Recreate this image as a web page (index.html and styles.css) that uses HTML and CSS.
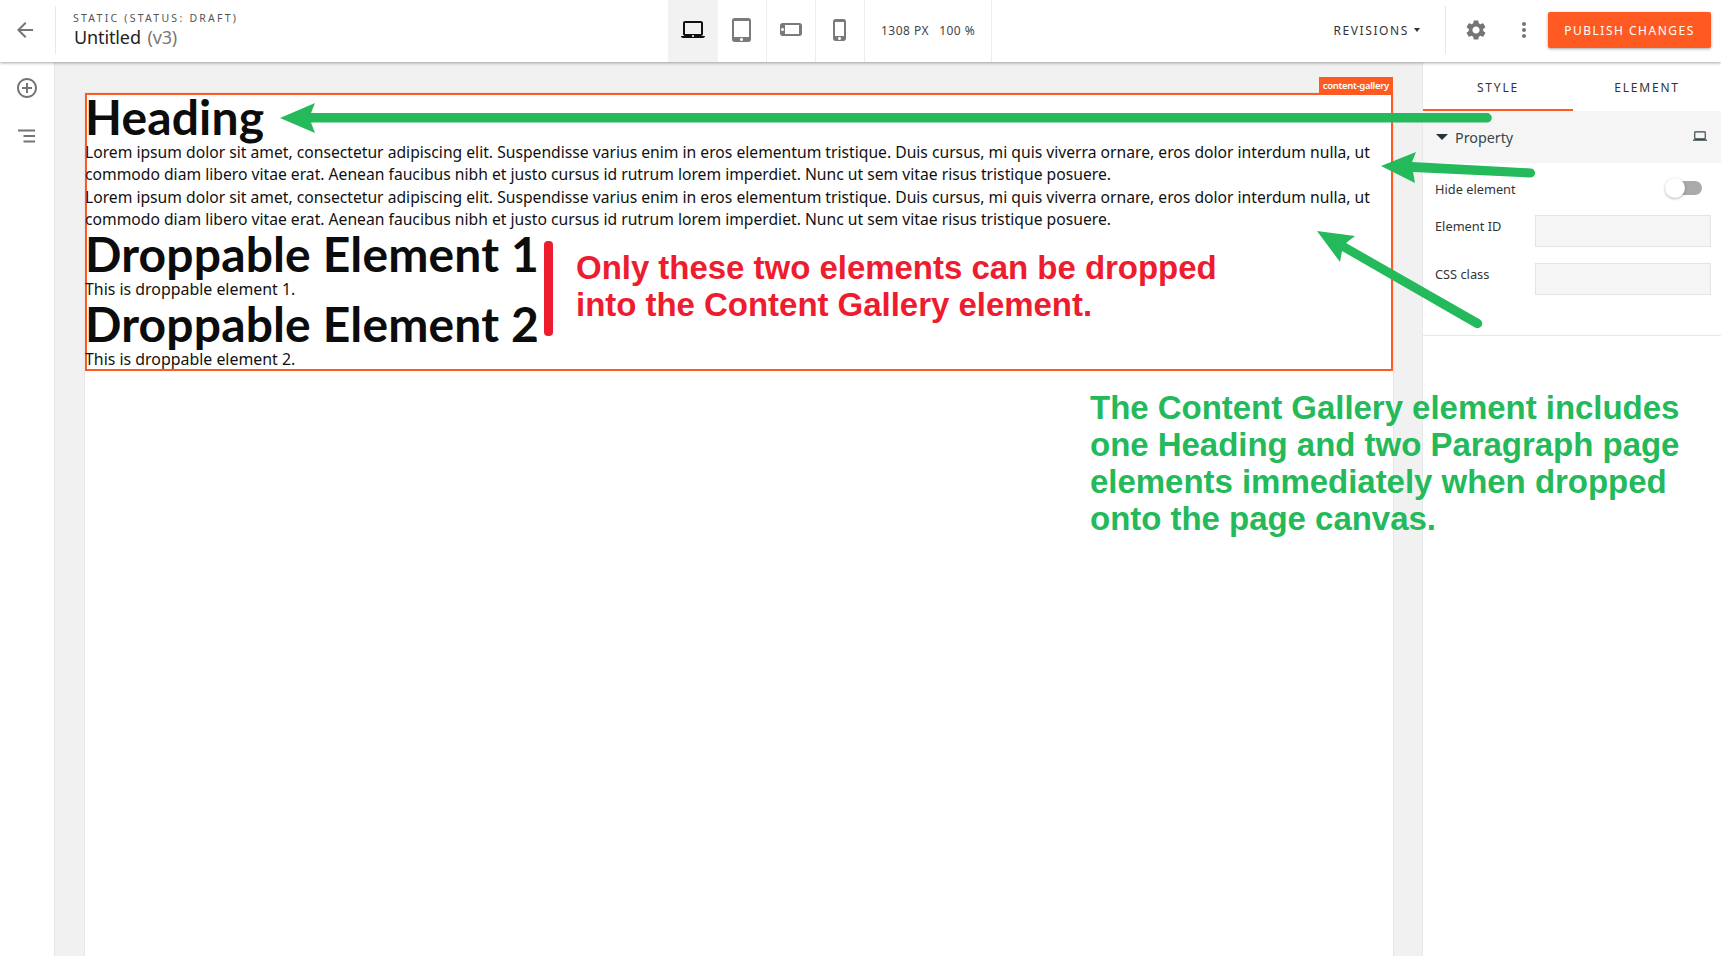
FILE: index.html
```html
<!DOCTYPE html>
<html lang="en">
<head>
  <meta charset="UTF-8" />
  <title>Untitled - Page Builder</title>
  <link rel="stylesheet" href="styles.css">
</head>
<body>
  <header class="topbar">
    <div class="topbar-left">
      <button class="back-btn">
        <svg viewBox="0 0 24 24" width="24" height="24"><path d="M20 11H7.83l5.59-5.59L12 4l-8 8 8 8 1.41-1.41L7.83 13H20v-2z"/></svg>
      </button>
      <div class="page-title">
        <div class="page-kind">STATIC (STATUS: DRAFT)</div>
        <div class="page-name">Untitled <span class="page-version">(v3)</span></div>
      </div>
    </div>
    <div class="devices">
      <div class="device active">
        <svg viewBox="0 0 24 24" width="24" height="24"><path d="M20 18c1.1 0 1.99-.9 1.99-2L22 5c0-1.1-.9-2-2-2H4c-1.1 0-2 .9-2 2v11c0 1.1.9 2 2 2H0c0 1.1.9 2 2 2h20c1.1 0 2-.9 2-2h-4zM4 5h16v11H4V5zm8 14c-.55 0-1-.45-1-1s.45-1 1-1 1 .45 1 1-.45 1-1 1z"/></svg>
      </div>
      <div class="device">
        <svg viewBox="0 0 24 24" width="24" height="24"><path d="M18.5 0h-14C3.12 0 2 1.12 2 2.5v19C2 22.88 3.12 24 4.5 24h14c1.38 0 2.5-1.12 2.5-2.5v-19C21 1.12 19.88 0 18.5 0zm-7 23c-.83 0-1.5-.67-1.5-1.5s.67-1.5 1.5-1.5 1.5.67 1.5 1.5-.67 1.5-1.5 1.5zm7.5-4H4V3h15v16z"/></svg>
      </div>
      <div class="device">
        <svg viewBox="0 0 24 24" width="24" height="24"><path transform="rotate(90 12 12)" d="M15.5 1h-8C6.12 1 5 2.12 5 3.5v17C5 21.88 6.12 23 7.5 23h8c1.38 0 2.5-1.12 2.5-2.5v-17C18 2.12 16.88 1 15.5 1zm-4 21c-.83 0-1.5-.67-1.5-1.5s.67-1.5 1.5-1.5 1.5.67 1.5 1.5-.67 1.5-1.5 1.5zm4.5-4H7V4h9v14z"/></svg>
      </div>
      <div class="device">
        <svg viewBox="0 0 24 24" width="24" height="24"><path d="M15.5 1h-8C6.12 1 5 2.12 5 3.5v17C5 21.88 6.12 23 7.5 23h8c1.38 0 2.5-1.12 2.5-2.5v-17C18 2.12 16.88 1 15.5 1zm-4 21c-.83 0-1.5-.67-1.5-1.5s.67-1.5 1.5-1.5 1.5.67 1.5 1.5-.67 1.5-1.5 1.5zm4.5-4H7V4h9v14z"/></svg>
      </div>
      <div class="canvas-size"><span>1308 PX</span><span>100 %</span></div>
    </div>
    <div class="topbar-right">
      <div class="revisions">REVISIONS <span class="caret"></span></div>
      <div class="icon-btn gear">
        <svg viewBox="0 0 24 24" width="24" height="24"><path d="M19.14 12.94c.04-.3.06-.61.06-.94 0-.32-.02-.64-.07-.94l2.03-1.58c.18-.14.23-.41.12-.61l-1.92-3.32c-.12-.22-.37-.29-.59-.22l-2.39.96c-.5-.38-1.03-.7-1.62-.94l-.36-2.54c-.04-.24-.24-.41-.48-.41h-3.84c-.24 0-.43.17-.47.41l-.36 2.54c-.59.24-1.13.57-1.62.94l-2.39-.96c-.22-.08-.47 0-.59.22L2.74 8.87c-.12.21-.08.47.12.61l2.03 1.58c-.05.3-.09.63-.09.94s.02.64.07.94l-2.03 1.58c-.18.14-.23.41-.12.61l1.92 3.32c.12.22.37.29.59.22l2.39-.96c.5.38 1.03.7 1.62.94l.36 2.54c.05.24.24.41.48.41h3.84c.24 0 .44-.17.47-.41l.36-2.54c.59-.24 1.13-.56 1.62-.94l2.39.96c.22.08.47 0 .59-.22l1.92-3.32c.12-.22.07-.47-.12-.61l-2.01-1.58zM12 15.6c-1.98 0-3.6-1.62-3.6-3.6s1.62-3.6 3.6-3.6 3.6 1.62 3.6 3.6-1.62 3.6-3.6 3.6z"/></svg>
      </div>
      <div class="icon-btn dots">
        <svg viewBox="0 0 24 24" width="24" height="24"><path d="M12 8c1.1 0 2-.9 2-2s-.9-2-2-2-2 .9-2 2 .9 2 2 2zm0 2c-1.1 0-2 .9-2 2s.9 2 2 2 2-.9 2-2-.9-2-2-2zm0 6c-1.1 0-2 .9-2 2s.9 2 2 2 2-.9 2-2-.9-2-2-2z"/></svg>
      </div>
      <button class="publish">PUBLISH CHANGES</button>
    </div>
  </header>

  <div class="workspace">
    <aside class="toolbar">
      <svg viewBox="0 0 24 24" width="24" height="24"><path d="M13 7h-2v4H7v2h4v4h2v-4h4v-2h-4V7zm-1-5C6.48 2 2 6.48 2 12s4.48 10 10 10 10-4.48 10-10S17.52 2 12 2zm0 18c-4.41 0-8-3.59-8-8s3.59-8 8-8 8 3.59 8 8-3.59 8-8 8z"/></svg>
      <svg viewBox="0 0 24 24" width="24" height="24"><path d="M3 5.500h17v2H3zM8.500 11h11.500v2H8.500zM8.500 16.500h11.500v2H8.500z"/></svg>
    </aside>

    <main class="canvas">
      <div class="page">
        <div class="gallery">
          <span class="gallery-tag">content-gallery</span>
          <h1>Heading</h1>
          <p>Lorem ipsum dolor sit amet, consectetur adipiscing elit. Suspendisse varius enim in eros elementum tristique. Duis cursus, mi quis viverra ornare, eros dolor interdum nulla, ut commodo diam libero vitae erat. Aenean faucibus nibh et justo cursus id rutrum lorem imperdiet. Nunc ut sem vitae risus tristique posuere.</p>
          <p>Lorem ipsum dolor sit amet, consectetur adipiscing elit. Suspendisse varius enim in eros elementum tristique. Duis cursus, mi quis viverra ornare, eros dolor interdum nulla, ut commodo diam libero vitae erat. Aenean faucibus nibh et justo cursus id rutrum lorem imperdiet. Nunc ut sem vitae risus tristique posuere.</p>
          <div class="droppable">
            <h1>Droppable Element 1</h1>
            <p>This is droppable element 1.</p>
            <h1>Droppable Element 2</h1>
            <p>This is droppable element 2.</p>
          </div>
        </div>
      </div>
    </main>

    <aside class="panel">
      <div class="tabs">
        <div class="tab active">STYLE</div>
        <div class="tab">ELEMENT</div>
      </div>
      <div class="section-head">
        <span class="section-caret"></span>
        <span class="section-title">Property</span>
        <svg viewBox="0 0 24 24" width="14" height="14"><path d="M20 18c1.1 0 1.99-.9 1.99-2L22 6c0-1.1-.9-2-2-2H4c-1.1 0-2 .9-2 2v10c0 1.1.9 2 2 2H0v2h24v-2h-4zM4 6h16v10H4V6z"/></svg>
      </div>
      <div class="section-body">
        <div class="field toggle-field">
          <label>Hide element</label>
          <span class="toggle"><span class="knob"></span></span>
        </div>
        <div class="field">
          <label for="element-id">Element ID</label>
          <input type="text" id="element-id" />
        </div>
        <div class="field">
          <label for="css-class">CSS class</label>
          <input type="text" id="css-class" />
        </div>
      </div>
    </aside>
  </div>

  <!-- annotations drawn on top of the screenshot -->
  <svg class="arrows" viewBox="0 0 1721 956" width="1721" height="956">
    <g fill="#24b95a" stroke="none">
      <path d="M1487 113 a4.800 4.800 0 0 1 0 9.600 H311 L315 133 L280 118 L315 103 L311 113 Z"/>
      <path d="M1412 162 L1416 152 L1381 166 L1415 183 L1413 172 L1530 177.500 a4.500 4.500 0 0 0 1 -9 Z"/>
      <path d="M1346 243 L1355 236 L1317 231 L1340 262 L1342 251 L1475 327.500 a4.500 4.500 0 0 0 5 -8 Z"/>
    </g>
    <rect x="544" y="241" width="9" height="95" rx="4" fill="#ed1c2e"/>
  </svg>
  <div class="note note-red">Only these two elements can be dropped<br>into the Content Gallery element.</div>
  <div class="note note-green">The Content Gallery element includes<br>one Heading and two Paragraph page<br>elements immediately when dropped<br>onto the page canvas.</div>
</body>
</html>
```

FILE: styles.css
```css
* {
  box-sizing: border-box;
}
html, body {
  height: 100%;
}
body {
  margin: 0;
  background: #fff;
  color: #111;
  font-family: 'Noto Sans', Arial, sans-serif;
  display: flex;
  flex-direction: column;
  position: relative;
  overflow: hidden;
}

/* top bar */
.topbar {
  height: 62px;
  flex: none;
  display: flex;
  background: #fff;
  box-shadow: 0 1px 3px rgba(0, 0, 0, 0.35);
  position: relative;
  z-index: 2;
}
.topbar-left {
  width: 668px;
  display: flex;
  align-items: center;
  padding-bottom: 2px;
}
.back-btn {
  width: 56px;
  height: 48px;
  padding: 0 5px 0 0;
  background: none;
  border: none;
  border-right: 1px solid #e8e8e8;
  display: flex;
  align-items: center;
  justify-content: center;
}
.back-btn svg {
  fill: #757575;
}
.page-title {
  margin-left: 17px;
}
.page-kind {
  font-size: 10.500px;
  letter-spacing: 2.250px;
  color: #555;
  line-height: 14px;
}
.page-name {
  font-size: 18px;
  line-height: 24px;
  margin-left: 1px;
  color: #222;
  letter-spacing: -0.120px;
}
.page-version {
  color: #777;
  margin-left: 2px;
}
.devices {
  display: flex;
}
.device {
  width: 49px;
  height: 62px;
  padding-bottom: 2px;
  border-right: 1px solid #eee;
  display: flex;
  align-items: center;
  justify-content: center;
}
.device svg {
  fill: #7a7a7a;
}
.device.active {
  width: 50px;
  background: #f2f2f2;
  border-right: none;
}
.device.active svg {
  fill: #111;
}
.canvas-size {
  width: 127px;
  border-right: 1px solid #eee;
  padding: 0 0 2px 16px;
  display: flex;
  gap: 10px;
  align-items: center;
  font-size: 12px;
  letter-spacing: 0.500px;
  color: #444;
}
.topbar-right {
  margin-left: auto;
  display: flex;
  align-items: center;
  padding: 0 10px 2px 0;
}
.revisions {
  font-size: 12px;
  letter-spacing: 1.600px;
  color: #333;
  display: flex;
  align-items: center;
  gap: 5px;
  padding-right: 25px;
  height: 48px;
  border-right: 1px solid #e8e8e8;
}
.caret {
  width: 0;
  height: 0;
  border-left: 3.500px solid transparent;
  border-right: 3.500px solid transparent;
  border-top: 4px solid #333;
}
.icon-btn {
  display: flex;
  align-items: center;
  justify-content: center;
}
.icon-btn svg {
  fill: #757575;
}
.gear {
  width: 59px;
}
.dots {
  width: 37px;
}
.publish {
  width: 163px;
  height: 36px;
  margin-left: 6px;
  padding-bottom: 1px;
  background: #ff5a22;
  color: #fff;
  border: none;
  border-radius: 2px;
  box-shadow: 0 1px 3px rgba(0, 0, 0, 0.35);
  font-family: inherit;
  font-size: 12px;
  letter-spacing: 1.500px;
}

/* main area */
.workspace {
  flex: 1;
  display: flex;
  min-height: 0;
}
.toolbar {
  width: 55px;
  flex: none;
  border-right: 1px solid #e4e4e4;
  display: flex;
  flex-direction: column;
  align-items: center;
  gap: 24px;
  padding: 14px 1px 0 0;
}
.toolbar svg {
  fill: #757575;
}
.canvas {
  flex: 1;
  background: #f1f1f1;
  padding: 31px 29px 0 30px;
}
.page {
  background: #fff;
  height: 100%;
  width: 1308px;
  box-shadow: 0 0 1px rgba(0, 0, 0, 0.25);
}
.gallery {
  position: relative;
  box-shadow: inset 0 0 0 2px #ff5a22;
  height: 278px;
}
.gallery-tag {
  position: absolute;
  right: 0;
  top: -16px;
  height: 16px;
  padding: 0 4px;
  background: #ff5a22;
  color: #fff;
  font-size: 9.500px;
  font-weight: 600;
  line-height: 17px;
  letter-spacing: -0.300px;
}
.gallery h1 {
  margin: 0;
  font-family: Lato, sans-serif;
  font-size: 48px;
  font-weight: 700;
  line-height: 48px;
  letter-spacing: 0.150px;
  color: #0c0c0c;
}
.gallery p {
  margin: 0;
  font-size: 15.680px;
  line-height: 22.400px;
  color: #111;
}
.droppable {
  margin-top: -1px;
}
.droppable p {
  font-size: 15.900px;
}

/* right panel */
.panel {
  width: 299px;
  flex: none;
  background: #fff;
  border-left: 1px solid #e8e8e8;
}
.tabs {
  display: flex;
  height: 49px;
}
.tab {
  flex: 1;
  text-align: center;
  font-size: 12px;
  letter-spacing: 1.800px;
  line-height: 52px;
  color: #333;
}
.tab.active {
  flex: none;
  width: 150px;
  border-bottom: 2px solid #ff5a22;
}
.section-head {
  height: 52px;
  display: flex;
  align-items: center;
  background: #f5f5f5;
  padding: 0 14px 0 13px;
}
.section-head svg {
  fill: #37474f;
  margin-left: auto;
  margin-top: -2px;
}
.section-caret {
  width: 0;
  height: 0;
  border-left: 6px solid transparent;
  border-right: 6px solid transparent;
  border-top: 6px solid #263238;
}
.section-title {
  margin-left: 7px;
  font-size: 14.300px;
  line-height: 22px;
  padding-top: 2px;
  color: #37474f;
}
.section-body {
  padding: 15px 10px 24px 12px;
  border-bottom: 1px solid #e8e8e8;
}
.field {
  display: flex;
  justify-content: space-between;
  margin-bottom: 16px;
}
.field label {
  font-size: 12.800px;
  color: #333;
  line-height: 18px;
  padding-top: 2px;
}
.field input {
  width: 176px;
  height: 32px;
  background: #f5f5f5;
  border: 1px solid #e4e4e4;
  padding: 0 8px;
}
.toggle-field {
  align-items: center;
  margin-bottom: 17px;
  height: 20px;
  padding-right: 10px;
}
.toggle {
  position: relative;
  width: 26px;
  height: 14px;
  border-radius: 7px;
  background: #aaa;
  margin-right: -1px;
}
.knob {
  position: absolute;
  left: -11px;
  top: -3px;
  width: 20px;
  height: 20px;
  border-radius: 50%;
  background: #fff;
  box-shadow: 0 1px 3px rgba(0, 0, 0, 0.3);
}

/* annotations */
.arrows {
  position: absolute;
  left: 0;
  top: 0;
  z-index: 3;
  pointer-events: none;
}
.note {
  position: absolute;
  z-index: 3;
  font-family: 'Liberation Sans', Arial, sans-serif;
  font-weight: 700;
  font-size: 33px;
  line-height: 37px;
  letter-spacing: -0.030px;
  white-space: nowrap;
}
.note-red {
  left: 576px;
  top: 249px;
  color: #ed1c2e;
}
.note-green {
  left: 1090px;
  top: 389px;
  color: #24b95a;
}
```
